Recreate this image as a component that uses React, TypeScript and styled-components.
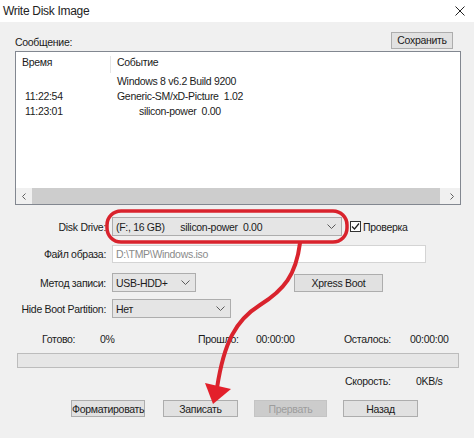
import React from 'react'
import styled, { createGlobalStyle } from 'styled-components'

const GlobalStyle = createGlobalStyle`
  html, body {
    margin: 0;
    padding: 0;
  }
  body {
    background: #f0f0f0;
    font-family: "Liberation Sans", Arial, sans-serif;
    font-size: 10.5px;
    letter-spacing: -0.3px;
    color: #1b1b1b;
  }
`

const Chevron: React.FC = () => (
    <svg width="9" height="5" viewBox="0 0 9 5">
        <path d="M0.5 0.5 L4.5 4.5 L8.5 0.5" fill="none" stroke="#5a5a5a" strokeWidth="1" />
    </svg>
)

const CloseIcon: React.FC = () => (
    <svg width="10" height="10" viewBox="0 0 10 10">
        <path d="M0.5 0.5 L9.5 9.5 M9.5 0.5 L0.5 9.5" stroke="#222" strokeWidth="1" />
    </svg>
)

const CheckMark: React.FC = () => (
    <svg width="9" height="9" viewBox="0 0 9 9">
        <path d="M1 4.5 L3.5 7 L8 1.5" fill="none" stroke="#222" strokeWidth="1.2" />
    </svg>
)

const ScrollChevron: React.FC<{ dir: 'left' | 'right' }> = ({ dir }) => (
    <svg width="4" height="7" viewBox="0 0 4 7">
        <path
            d={dir === 'left' ? 'M3.5 0.5 L0.5 3.5 L3.5 6.5' : 'M0.5 0.5 L3.5 3.5 L0.5 6.5'}
            fill="none"
            stroke="#606060"
            strokeWidth="1"
        />
    </svg>
)

const Annotation: React.FC = () => (
    <Overlay width="474" height="438" viewBox="0 0 474 438">
        <rect x="107" y="211" width="240" height="31" rx="14" fill="none" stroke="#d9232d" strokeWidth="3.5" />
        <path
            d="M300 243 C296 275 284 290 260 305 S224 342 217 388"
            fill="none"
            stroke="#d9232d"
            strokeWidth="4"
            strokeLinecap="round"
        />
        <polygon points="205,383 231,389 213,404" fill="#e3202b" />
    </Overlay>
)

export default function App() {
    return (
        <Window>
            <GlobalStyle />
            <TitleBar>
                <span>Write Disk Image</span>
                <CloseIcon />
            </TitleBar>
            <Body>
                <HeaderRow>
                    <span>Сообщение:</span>
                    <Button $w={62}>Сохранить</Button>
                </HeaderRow>
                <ListBox>
                    <ListContent>
                        <ListHeader>
                            <HeaderCell $w={95} $divider>Время</HeaderCell>
                            <HeaderCell>Событие</HeaderCell>
                        </ListHeader>
                        <ListRow>
                            <TimeCell />
                            <EventCell>Windows 8 v6.2 Build 9200</EventCell>
                        </ListRow>
                        <ListRow>
                            <TimeCell>11:22:54</TimeCell>
                            <EventCell>Generic-SM/xD-Picture  1.02</EventCell>
                        </ListRow>
                        <ListRow>
                            <TimeCell>11:23:01</TimeCell>
                            <EventCell $indent={22}>silicon-power  0.00</EventCell>
                        </ListRow>
                    </ListContent>
                    <ScrollBar>
                        <ScrollArrow>
                            <ScrollChevron dir="left" />
                        </ScrollArrow>
                        <ScrollThumb />
                        <ScrollArrow>
                            <ScrollChevron dir="right" />
                        </ScrollArrow>
                    </ScrollBar>
                </ListBox>

                <FormRow $top={12} $h={19}>
                    <Label>Disk Drive:</Label>
                    <Select $w={230}>
                        <SelectText>(F:, 16 GB)      silicon-power  0.00</SelectText>
                        <Chevron />
                    </Select>
                    <CheckBox>
                        <CheckMark />
                    </CheckBox>
                    <CheckLabel>Проверка</CheckLabel>
                </FormRow>
                <FormRow $top={9} $h={18}>
                    <Label>Файл образа:</Label>
                    <TextField>D:\TMP\Windows.iso</TextField>
                </FormRow>
                <FormRow $top={10} $h={19}>
                    <Label>Метод записи:</Label>
                    <Select $w={84}>
                        <SelectText>USB-HDD+</SelectText>
                        <Chevron />
                    </Select>
                    <Button $w={89} $h={18} $left={98}>Xpress Boot</Button>
                </FormRow>
                <FormRow $top={7} $h={19}>
                    <Label>Hide Boot Partition:</Label>
                    <Select $w={119}>
                        <SelectText>Нет</SelectText>
                        <Chevron />
                    </Select>
                </FormRow>

                <StatsGrid>
                    <span>Готово:</span>
                    <span>0%</span>
                    <span>Прошло:</span>
                    <span>00:00:00</span>
                    <span>Осталось:</span>
                    <span>00:00:00</span>
                </StatsGrid>
                <ProgressBar />
                <SpeedRow>
                    <SpeedLabel>Скорость:</SpeedLabel>
                    <span>0KB/s</span>
                </SpeedRow>

                <ButtonRow>
                    <Button $w={74}>Форматировать</Button>
                    <Button $w={75}>Записать</Button>
                    <Button $w={73} disabled>Прервать</Button>
                    <Button $w={75}>Назад</Button>
                </ButtonRow>
            </Body>
            <Annotation />
        </Window>
    )
}

const Window = styled.div`
    position: relative;
    width: 474px;
    height: 438px;
    background: #f0f0f0;
    overflow: hidden;
`

const TitleBar = styled.div`
    display: flex;
    align-items: center;
    justify-content: space-between;
    height: 22px;
    padding: 0 9px 0 3px;
    background: #ffffff;
    font-size: 12px;
    color: #222;
`

const Body = styled.div`
    display: flex;
    flex-direction: column;
    padding: 0 13px 0 15px;
`

const HeaderRow = styled.div`
    display: flex;
    align-items: flex-end;
    justify-content: space-between;
    height: 17px;
    margin-top: 10px;
    padding-right: 8px;
    line-height: 13px;
`

const Button = styled.button<{ $w: number; $h?: number; $left?: number }>`
    box-sizing: border-box;
    width: ${({ $w }) => $w}px;
    height: ${({ $h }) => $h ?? 17}px;
    margin-left: ${({ $left }) => $left ?? 0}px;
    padding: 0;
    border: 1px solid #adadad;
    background: #e1e1e1;
    font: inherit;
    letter-spacing: inherit;
    white-space: nowrap;
    color: #1b1b1b;

    &:disabled {
        border-color: #c4c4c4;
        background: #cccccc;
        color: #9d9d9d;
    }
`

const ListBox = styled.div`
    box-sizing: border-box;
    display: flex;
    flex-direction: column;
    width: 446px;
    height: 154px;
    margin-top: 2px;
    border: 1px solid #828790;
    background: #ffffff;
`

const ListContent = styled.div`
    flex: 1;
`

const ListHeader = styled.div`
    display: flex;
    align-items: flex-end;
    height: 21px;
`

const HeaderCell = styled.div<{ $w?: number; $divider?: boolean }>`
    box-sizing: border-box;
    width: ${({ $w }) => ($w ? `${$w}px` : 'auto')};
    height: 17px;
    padding-left: 6px;
    line-height: 13px;
    border-right: ${({ $divider }) => ($divider ? '1px solid #e5e5e5' : 'none')};
`

const ListRow = styled.div`
    display: flex;
    align-items: center;
    height: 15px;
`

const TimeCell = styled.div`
    box-sizing: border-box;
    width: 95px;
    padding-left: 9px;
`

const EventCell = styled.div<{ $indent?: number }>`
    padding-left: ${({ $indent }) => 6 + ($indent ?? 0)}px;
    white-space: pre;
`

const ScrollBar = styled.div`
    display: flex;
    height: 16px;
    background: #f0f0f0;
`

const ScrollArrow = styled.div`
    display: flex;
    align-items: center;
    justify-content: center;
    width: 16px;
`

const ScrollThumb = styled.div`
    flex: 1;
    margin-right: 4px;
    background: #cdcdcd;
`

const FormRow = styled.div<{ $top: number; $h: number }>`
    display: flex;
    align-items: center;
    height: ${({ $h }) => $h}px;
    margin-top: ${({ $top }) => $top}px;
`

const Label = styled.div`
    width: 91px;
    margin-right: 6px;
    text-align: right;
    white-space: nowrap;
`

const Select = styled.div<{ $w: number }>`
    box-sizing: border-box;
    display: flex;
    align-items: center;
    justify-content: space-between;
    width: ${({ $w }) => $w}px;
    height: 19px;
    padding: 0 5px 0 3px;
    border: 1px solid #adadad;
    background: #e5e5e5;
`

const SelectText = styled.span`
    white-space: pre;
`

const CheckBox = styled.div`
    box-sizing: border-box;
    display: flex;
    align-items: center;
    justify-content: center;
    width: 11px;
    height: 11px;
    margin-left: 8px;
    border: 1px solid #333;
    background: #fff;
`

const CheckLabel = styled.span`
    margin-left: 2px;
`

const TextField = styled.div`
    box-sizing: border-box;
    display: flex;
    align-items: center;
    width: 314px;
    height: 18px;
    padding-left: 3px;
    border: 1px solid #d4d4d4;
    background: #ffffff;
    color: #8a8a8a;
`

const StatsGrid = styled.div`
    display: grid;
    grid-template-columns: 58px 98px 58px 88px 66px auto;
    margin-top: 14px;
    padding-left: 27px;
    line-height: 14px;
`

const ProgressBar = styled.div`
    box-sizing: border-box;
    width: 442px;
    height: 15px;
    margin: 7px 0 0 2px;
    border: 1px solid #bcbcbc;
    background: #e6e6e6;
`

const SpeedRow = styled.div`
    display: flex;
    margin-top: 6px;
    padding-left: 330px;
    line-height: 14px;
`

const SpeedLabel = styled.span`
    width: 71px;
`

const ButtonRow = styled.div`
    display: flex;
    margin-top: 12px;
    padding-left: 56px;
    gap: 16px;

    & > :nth-child(2) {
        margin-left: 2px;
    }
`

const Overlay = styled.svg`
    position: absolute;
    top: 0;
    left: 0;
    pointer-events: none;
`
